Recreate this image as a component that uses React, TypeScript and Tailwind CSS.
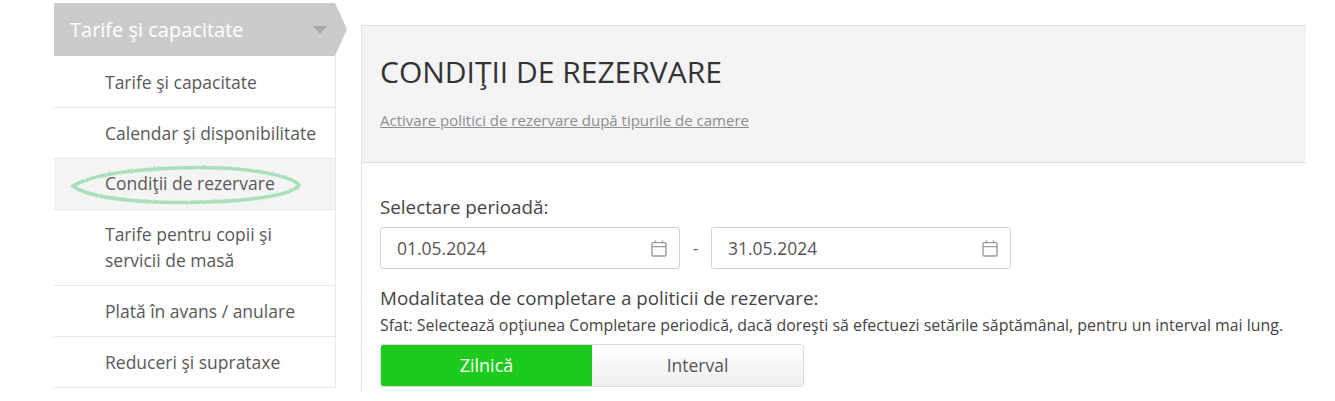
const menuItems = [
  { label: 'Tarife şi capacitate', rowClass: 'h-[51px]' },
  { label: 'Calendar şi disponibilitate', rowClass: 'h-[51px]' },
  { label: 'Condiţii de rezervare', rowClass: 'h-[51px] bg-[#f4f4f4]', textClass: '-translate-y-px', circled: true },
  { label: 'Tarife pentru copii şi servicii de masă', rowClass: 'h-[76px]', textClass: '-translate-y-px' },
  { label: 'Plată în avans / anulare', rowClass: 'h-[51px]' },
  { label: 'Reduceri şi suprataxe', rowClass: 'h-[51px]' },
];

const CalendarIcon = () => (
  <svg width="16" height="17" viewBox="0 0 16 17" fill="none" stroke="#9a9a9a" strokeWidth="1.4" className="shrink-0">
    <rect x="1" y="2.6" width="14" height="13.4" rx="1.2" />
    <path d="M1 6.6h14M4.5 0.5v2.6M11.5 0.5v2.6" />
  </svg>
);

const DateField = ({ value, width }: { value: string; width: string }) => (
  <div className={`${width} flex h-[42px] items-center justify-between rounded-[3px] border border-[#d4d4d4] bg-white pl-[16px] pr-[12px] text-[17.5px] text-[#555]`}>
    <span>{value}</span>
    <CalendarIcon />
  </div>
);

// hand drawn marker ring round the active menu item
const Scribble = () => (
  <svg width="232" height="44" viewBox="0 0 232 44" fill="none" className="absolute left-[16px] top-[4px]">
    <filter id="rough">
      <feTurbulence type="fractalNoise" baseFrequency="0.5" numOctaves="2" />
      <feDisplacementMap in="SourceGraphic" scale="2.5" />
    </filter>
    <path
      d="M3 23C22 11 70 5 125 4.500C180 4 222 13 229 22C224 32 176 39.500 112 39.500C56 39.500 16 33 3 23Z"
      stroke="#aadfbb"
      strokeWidth="3.6"
      filter="url(#rough)"
    />
  </svg>
);

export default function App() {
  return (
    <div className="flex h-[401px] w-[1335px] items-start overflow-hidden bg-white font-['Open_Sans',sans-serif]">
      <aside className="ml-[54px] mt-[3px] w-[293px] shrink-0">
        <div className="flex h-[53px] items-center justify-between bg-[#cbcbcb] pl-[16px] pr-[20px] text-[20px] text-white [clip-path:polygon(0_0,281px_0,293px_26px,281px_100%,0_100%)]">
          <span>Tarife şi capacitate</span>
          <span className="h-0 w-0 border-x-[7px] border-t-[8px] border-x-transparent border-t-[#a9a9a9]" />
        </div>
        <ul className="w-[282px] border-r border-[#e9e9e9] pt-[1px]">
          {menuItems.map((item) => (
            <li
              key={item.label}
              className={`relative flex items-center border-b border-[#e9e9e9] pl-[51px] pr-[14px] text-[17.5px] leading-[26px] text-[#595959] ${item.rowClass}`}
            >
              {item.circled && <Scribble />}
              <span className={`relative ${item.textClass ?? ''}`}>{item.label}</span>
            </li>
          ))}
        </ul>
      </aside>

      <main className="ml-[14px] mt-[25px] h-[367px] w-[945px] shrink-0 border-l border-[#e4e4e4]">
        <header className="h-[138px] border-y border-[#dedede] bg-[#f4f4f4] pl-[18px] pt-[26px]">
          <h1 className="text-[30px] leading-[40px] text-[#333]">CONDIŢII DE REZERVARE</h1>
          <a className="mt-[18px] block text-[15px] leading-[20px] text-[#8e8e8e] underline">
            Activare politici de rezervare după tipurile de camere
          </a>
        </header>
        <section className="pl-[18px] pt-[32px]">
          <p className="text-[18.8px] leading-[24px] text-[#444]">Selectare perioadă:</p>
          <div className="mt-[8px] flex items-center">
            <DateField value="01.05.2024" width="w-[300px]" />
            <span className="w-[31px] text-center text-[16px] text-[#555]">-</span>
            <DateField value="31.05.2024" width="w-[300px]" />
          </div>
          <p className="mt-[17px] text-[18.8px] leading-[24px] text-[#444]">Modalitatea de completare a politicii de rezervare:</p>
          <p className="mt-[4px] text-[15.9px] leading-[22px] text-[#444]">
            Sfat: Selectează opţiunea Completare periodică, dacă doreşti să efectuezi setările săptămânal, pentru un interval mai lung.
          </p>
          <div className="mt-[8px] flex h-[43px] w-[424px] overflow-hidden rounded-[3px] border border-[#dcdcdc] text-[17.5px]">
            <div className="flex w-[211px] items-center justify-center bg-[#1ccb1c] text-[18px] text-white">Zilnică</div>
            <div className="flex flex-1 items-center justify-center bg-gradient-to-b from-white to-[#efefef] text-[#555]">Interval</div>
          </div>
        </section>
      </main>
    </div>
  );
}
